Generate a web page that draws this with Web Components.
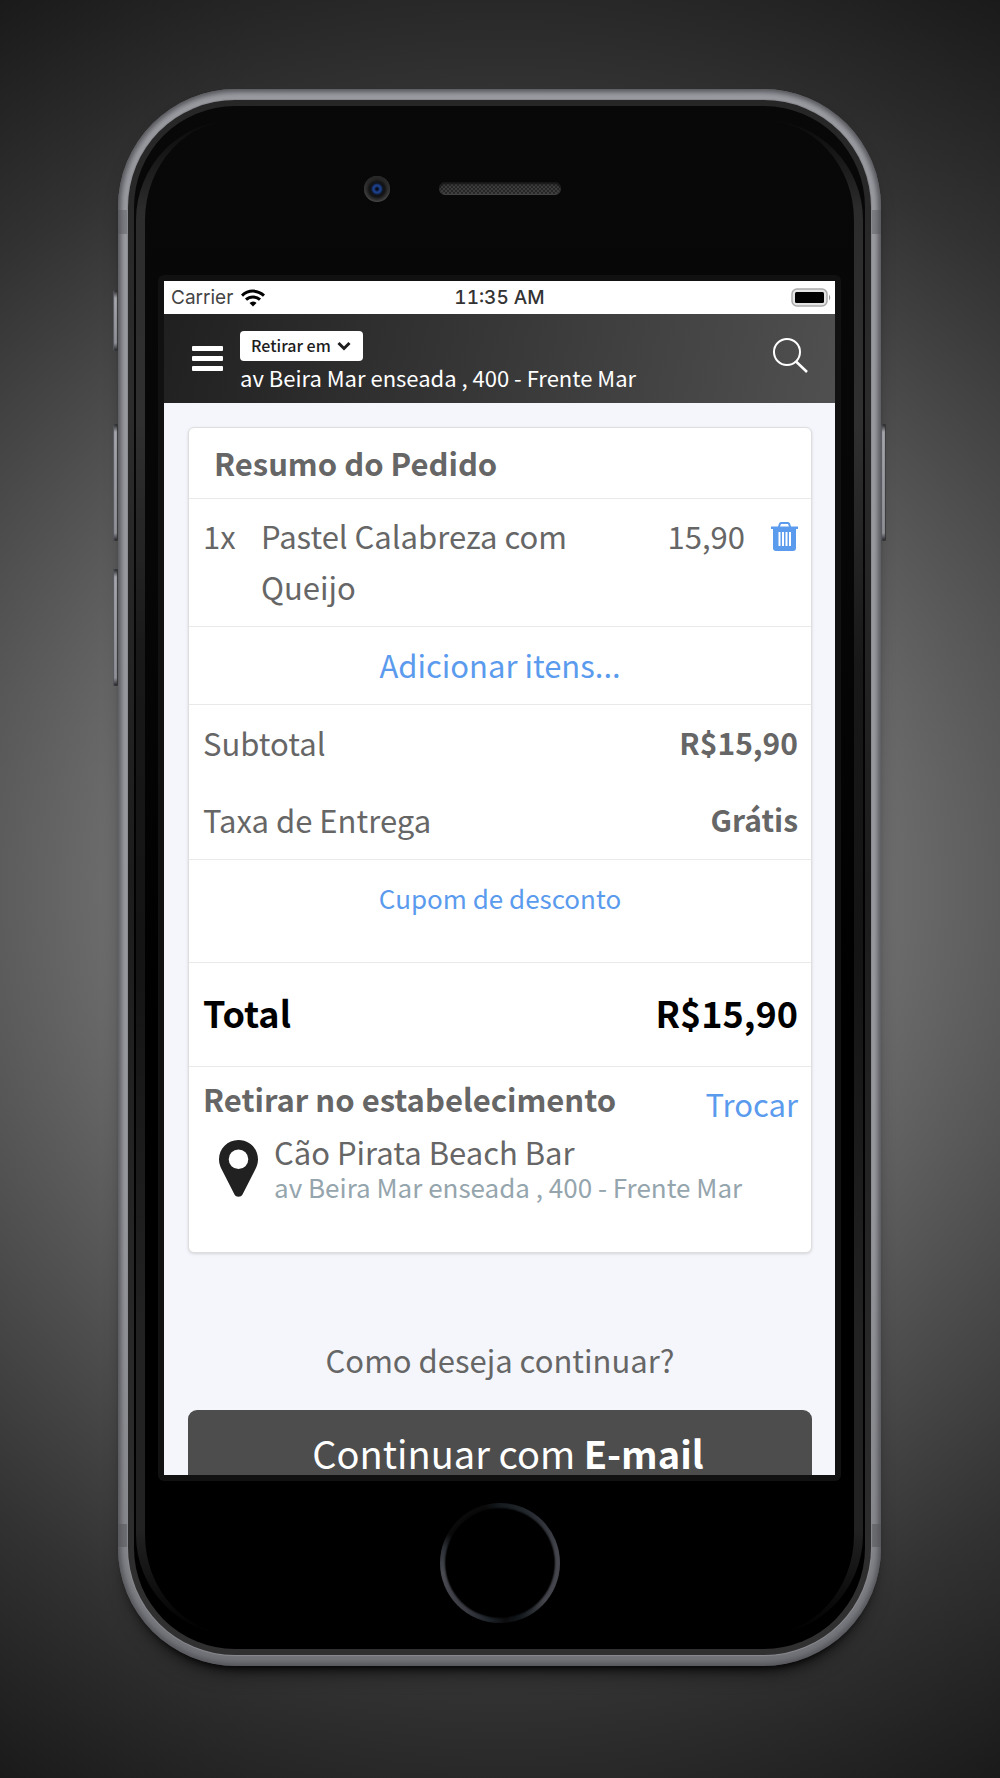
<!DOCTYPE html>
<html lang="pt-BR">
<head>
<meta charset="utf-8">
<meta name="viewport" content="width=device-width, initial-scale=1">
<title>Resumo do Pedido</title>
<style>
  body {
    margin: 0;
    min-height: 100vh;
    background: radial-gradient(circle at 50% 50%, #808080 0, #747474 330px, #5f5f5f 480px, #404040 700px, #323232 800px, #1a1a1a 1020px);
    font-family: "Noto Sans CJK SC", "Noto Sans", sans-serif;
    color: #666;
  }
</style>
</head>
<body>
<phone-frame>
  <status-bar></status-bar>
  <app-header></app-header>
  <order-page></order-page>
</phone-frame>

<script>
const define = (name, html) => {
  const template = document.createElement('template');
  template.innerHTML = html;
  customElements.define(name, class extends HTMLElement {
    constructor() {
      super();
      this.attachShadow({ mode: 'open' }).append(template.content.cloneNode(true));
    }
  });
};

define('phone-frame', `
<style>
  * { box-sizing: border-box; }
  :host { display: block; padding: 89px 119px 113px 118px; }
  .rim {
    position: relative;
    padding: 11px 10px;
    border-radius: 118px;
    background:
      linear-gradient(#0000 121px, #0003 121px, #0003 145px, #0000 145px, #0000 calc(100% - 142px), #0003 calc(100% - 142px), #0003 calc(100% - 119px), #0000 calc(100% - 119px)),
      linear-gradient(#9a9ba1, #97989e 70%, #85868b 92%, #707176);
    box-shadow: inset 0 0 5px 3px #55565b, 0 9px 8px -8px #000, 0 14px 24px -14px #000;
  }
  .edge { padding: 6px; border-radius: 107px; background: linear-gradient(#262626, #2c2c2c 20%, #1c1c1c 50%, #303030); box-shadow: 0 0 1px 1px #8a8b90; }
  .glass { padding: 14px 2px; border-radius: 101px; background: linear-gradient(#080808, #000 60%); }
  .shine { padding: 0 9px; border-radius: 100px; background: linear-gradient(#0a0a0a, #2c2c2c 6%, #303030 20%, #181818 36%, #141414 55%, #222 80%, #222 93%, #000); }
  .face { padding: 0 13px; border-radius: 92px / 100px; background: linear-gradient(#080808, #060606 30%, #000 60%); }
  .top { height: 155px; padding-bottom: 18px; display: grid; grid-template-columns: 1fr auto 1fr; align-items: center; }
  .camera {
    justify-self: end; width: 26px; height: 26px; margin-right: 49px; border-radius: 50%;
    background: radial-gradient(circle, #080c18 0 1px, #1c3f8a 3px 4px, #10141c 6px, #151515 8px, #333 11px, #4c4c4c 13px);
    box-shadow: inset 0 3px 4px #222;
  }
  .speaker {
    width: 122px; height: 13px; border-radius: 7px;
    background: repeating-conic-gradient(#3d3d3d 0 25%, #262626 0 50%) 0 0 / 4px 4px;
    box-shadow: inset 0 2px 2px #151515, inset 0 -1px 1px #444;
  }
  .bezel { padding: 6px; border-radius: 6px; background: #111; }
  .screen { aspect-ratio: 671 / 1194; overflow: hidden; background: #f4f6fb; }
  .bottom { height: 154px; padding-top: 10px; display: flex; justify-content: center; align-items: center; }
  .home {
    width: 120px; height: 120px; padding: 0; border: 0; border-radius: 50%;
    background: conic-gradient(#141a1e, #2c3036 40deg, #45464d 80deg, #45464d 130deg, #12181c 160deg, #0c0c0e 175deg, #1c2228 190deg, #3a3b42 215deg, #4a4b52 260deg, #2c3036 285deg, #0a0a0a 300deg, #0a0a0a 345deg, #141a1e);
    display: grid; place-items: center;
  }
  .home::before { content: ""; width: 108px; height: 108px; border-radius: 50%; background: #000; box-shadow: 0 0 2px 1px #000; }
  .key {
    position: absolute; width: 5px; left: -5px; border-radius: 2px;
    background: linear-gradient(#1c1c20, #a5a6ac 8px, #8f9096 calc(100% - 8px), #1c1c20);
    box-shadow: inset 1px 0 1px #55565c, inset -1px 0 1px #333;
  }
  .mute { top: 201px; height: 61px; }
  .up { top: 335px; height: 117px; }
  .down { top: 480px; height: 117px; }
  .power { top: 335px; height: 117px; left: auto; right: -5px; }
</style>
<div class="rim">
  <span class="key mute"></span><span class="key up"></span><span class="key down"></span><span class="key power"></span>
  <div class="edge"><div class="glass"><div class="shine"><div class="face">
    <div class="top"><span class="camera"></span><span class="speaker"></span></div>
    <div class="bezel"><div class="screen"><slot></slot></div></div>
    <div class="bottom"><button class="home" aria-label="Home"></button></div>
  </div></div></div></div>
</div>`);

define('status-bar', `
<style>
  :host {
    display: grid; grid-template-columns: 1fr auto 1fr; align-items: center;
    height: 33px; padding: 0 7px; background: #fff; color: #333;
    font: 19px/33px Inter, "Liberation Sans", sans-serif;
  }
  .left { display: flex; align-items: center; gap: 8px; color: #444; }
  .time { font-weight: 500; font-variant-numeric: tabular-nums; }
  .battery { justify-self: end; margin-right: -4px; }
  svg { display: block; }
</style>
<span class="left">Carrier
  <svg width="24" height="18" viewBox="0 0 24 18" fill="none" stroke="#000" stroke-width="3"><path d="M1 6.6C7.200 0.600 16.800 0.600 23 6.600M5 10.700C9 7 15 7 19 10.700"/><path d="M8.500 14Q12 11 15.500 14L12 17.500Z" fill="#000" stroke="none"/></svg>
</span>
<span class="time">11:35 AM</span>
<svg class="battery" width="41" height="20" viewBox="0 0 41 20"><rect x="1" y="1" width="35" height="17" rx="5" fill="#e4e4e4" stroke="#aaa" stroke-width="1.500"/><rect x="4" y="4" width="29" height="11" rx="1.500"/><path d="M38 6.500Q40.500 9.500 38 12.500Z" fill="#999"/></svg>`);

define('app-header', `
<style>
  :host {
    display: flex; align-items: center; height: 89px; box-sizing: border-box; padding: 0 26px 0 28px;
    background: linear-gradient(105deg, #202020, #505050); color: #fff;
  }
  button { padding: 0; border: 0; background: none; }
  svg { display: block; }
  .place { flex: 1; min-width: 0; margin-left: 17px; padding-top: 7px; }
  label { display: inline-grid; align-items: center; }
  select, label svg { grid-area: 1 / 1; }
  select {
    appearance: none; height: 30px; width: 123px; padding: 0 0 1px 11px; border: 0; border-radius: 4px;
    background: #fff; color: #1d1d1d; font: 500 16px/29px "Noto Sans CJK SC", "Noto Sans", sans-serif;
  }
  label svg { justify-self: end; margin-right: 12px; pointer-events: none; }
  .address { font-size: 22px; line-height: 32px; white-space: nowrap; }
  .search { padding-bottom: 6px; }
</style>
<button aria-label="Menu"><svg width="31" height="25" viewBox="0 0 31 25" fill="#fff"><rect width="31" height="5" rx="1"/><rect y="10" width="31" height="5" rx="1"/><rect y="20" width="31" height="5" rx="1"/></svg></button>
<div class="place">
  <label><select aria-label="Retirar em"><option>Retirar em</option></select>
    <svg width="14" height="10" viewBox="0 0 14 10" fill="none" stroke="#1d1d1d" stroke-width="3"><path d="M1.500 2L7 7.500L12.500 2"/></svg></label>
  <div class="address">av Beira Mar enseada , 400 - Frente Mar</div>
</div>
<button class="search" aria-label="Buscar"><svg width="37" height="35" viewBox="0 0 37 35" fill="none" stroke="#fff" stroke-width="2"><circle cx="15" cy="14" r="13"/><path d="M24 23.500L35 34" stroke-width="2.500"/></svg></button>`);

define('order-page', `
<style>
  :host { display: block; padding: 24px 23px 0 24px; }
  .ask { margin: 87px 0 30px; text-align: center; font-size: 31px; line-height: 40px; }
</style>
<order-card></order-card>
<p class="ask">Como deseja continuar?</p>
<continue-button>Continuar com <b>E-mail</b></continue-button>`);

define('continue-button', `
<style>
  :host { display: block; }
  button {
    display: block; width: 100%; height: 86px; padding: 0 0 0 16px; border: 0; border-radius: 9px;
    background: #4d4d4d; color: #fff; font: 38px/86px "Noto Sans CJK SC", "Noto Sans", sans-serif;
  }
</style>
<button><slot></slot></button>`);

define('order-row', `
<style>
  :host { display: flex; justify-content: space-between; padding: 12px 13px 14px 14px; font-size: 31px; line-height: 51px; }
  ::slotted(strong) { font-weight: 700; font-size: 30px; }
</style>
<slot name="label"></slot><slot></slot>`);

define('order-card', `
<style>
  :host { display: block; border: 1px solid #dedede; border-radius: 6px; background: #fff; box-shadow: 0 1px 3px #0002; font-size: 31px; line-height: 51px; }
  h2, h3, p { margin: 0; font-size: 31px; font-weight: 700; }
  section, h2 { border-bottom: 1px solid #e9e9e9; }
  a { color: #5b9bee; text-decoration: none; }
  h2 { padding: 9px 25px 10px; }
  .item { display: flex; padding: 11px 13px 14px 14px; }
  .qty { width: 58px; }
  .name { flex: 1; padding-right: 60px; }
  .item button { align-self: flex-start; margin: 12px 0 0 26px; padding: 0; border: 0; background: none; }
  svg { display: block; }
  .add { padding: 12px 14px 14px; text-align: center; }
  .coupon { padding: 18px 14px 45px; text-align: center; font-size: 26px; line-height: 39px; }
  .total { display: flex; justify-content: space-between; padding: 24px 13px 28px 14px; font-size: 36px; font-weight: 700; color: #000; }
  .pickup { padding: 12px 13px 49px 14px; border: 0; }
  .head { display: flex; justify-content: space-between; line-height: 39px; }
  .head a { padding-top: 5px; }
  .store { display: flex; padding: 10px 0 0 16px; gap: 16px; }
  .store svg { margin-top: 7px; }
  .store p { font-weight: 400; line-height: 37px; }
  .store .address { font-size: 26px; line-height: 33px; color: #95a5ad; }
</style>
<h2>Resumo do Pedido</h2>
<section class="item">
  <span class="qty">1x</span><span class="name">Pastel Calabreza com Queijo</span><span>15,90</span>
  <button aria-label="Remover"><svg width="27" height="29" viewBox="0 0 27 29" fill="#5b9bee"><path fill-rule="evenodd" d="M0 4.500H7L8 1.500Q8.500 0 10 0H17Q18.500 0 19 1.500L20 4.500H27V7H25V26Q25 29 22 29H5Q2 29 2 26V7H0ZM9 4.500H18L17 2H10ZM7.500 10V24H9.500V10ZM11 10V24H13V10ZM14.500 10V24H16.500V10ZM18 10V24H20V10Z"/></svg></button>
</section>
<section class="add"><a href="#itens">Adicionar itens...</a></section>
<section>
  <order-row><span slot="label">Subtotal</span><strong>R$15,90</strong></order-row>
  <order-row><span slot="label">Taxa de Entrega</span><strong>Grátis</strong></order-row>
</section>
<section class="coupon"><a href="#cupom">Cupom de desconto</a></section>
<section class="total"><span>Total</span><span>R$15,90</span></section>
<section class="pickup">
  <div class="head"><h3>Retirar no estabelecimento</h3><a href="#trocar">Trocar</a></div>
  <div class="store">
    <svg width="39" height="57" viewBox="0 0 39 57" fill="#212121"><path fill-rule="evenodd" d="M19.500 0C30.500 0 39 8.500 39 19.500C39 24 37.500 27 36 30L23.500 54.500C22 57.500 17 57.500 15.500 54.500L3 30C1.500 27 0 24 0 19.500C0 8.500 8.500 0 19.500 0ZM19.500 9.500A9.800 9.800 0 1 0 19.500 29.100A9.800 9.800 0 1 0 19.500 9.500Z"/></svg>
    <div><p>Cão Pirata Beach Bar</p><p class="address">av Beira Mar enseada , 400 - Frente Mar</p></div>
  </div>
</section>`);
</script>
</body>
</html>
